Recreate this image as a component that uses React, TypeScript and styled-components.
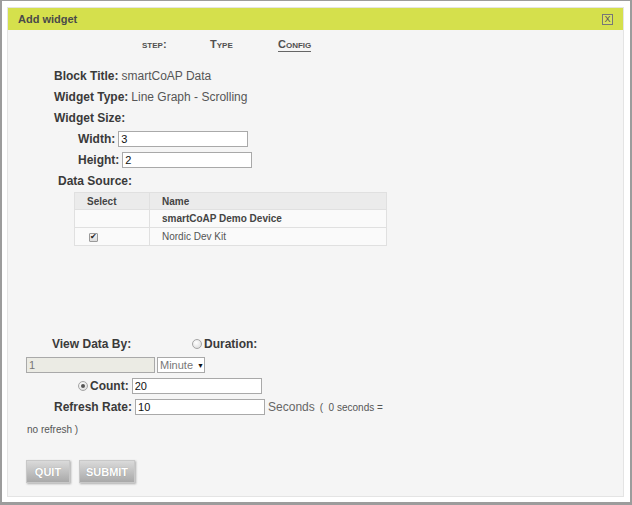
import React from "react";
import styled, { createGlobalStyle } from "styled-components";

const Global = createGlobalStyle`
  html, body { margin: 0; padding: 0; background: #ffffff; }
  body { font-family: "Liberation Sans", Arial, sans-serif; }
  * { box-sizing: border-box; }
`;

const Frame = styled.div`
  width: 632px;
  height: 505px;
  border-style: solid;
  border-color: #9c9c9c;
  border-width: 1px 2px 3px 2px;
  padding: 6px 0 0 5px;
  background: #ffffff;
`;

const Dialog = styled.div`
  width: 617px;
  height: 490px;
  border: 1px solid #e4e4e4;
  background: #f5f5f5;
  display: flex;
  flex-direction: column;
`;

const TitleBar = styled.div`
  height: 22px;
  flex: none;
  background: #d5e04c;
  display: flex;
  align-items: center;
  justify-content: space-between;
  padding: 0 10px 0 10px;
`;

const Title = styled.span`
  font-size: 11px;
  font-weight: bold;
  color: #4a4a4a;
`;

const CloseBox = styled.span`
  width: 11px;
  height: 11px;
  border: 1px solid #777;
  display: flex;
  align-items: center;
  justify-content: center;
  font-size: 9px;
  line-height: 1;
  color: #555;
  background: #d9e35c;
`;

const Steps = styled.div`
  height: 28px;
  display: flex;
  align-items: center;
  padding-left: 134px;
`;

const Step = styled.span<{ $active?: boolean }>`
  width: 68px;
  font-size: 11px;
  font-weight: bold;
  font-variant: small-caps;
  color: #505050;
  span {
    border-bottom: ${(p) => (p.$active ? "1px solid #666" : "none")};
    padding-bottom: 1px;
  }
`;

const Form = styled.div`
  margin-top: 7px;
  display: flex;
  flex-direction: column;
`;

const Row = styled.div<{ $indent: number; $h?: number }>`
  height: ${(p) => p.$h ?? 21}px;
  display: flex;
  align-items: center;
  padding-left: ${(p) => p.$indent}px;
  font-size: 12px;
  color: #555;
  white-space: nowrap;
`;

const Label = styled.span`
  font-weight: bold;
  color: #3a3a3a;
  margin-right: 3px;
`;

const TextInput = styled.input<{ $w?: number }>`
  width: ${(p) => p.$w ?? 130}px;
  height: 16px;
  border: 1px solid #a9a9a9;
  background: #fff;
  font-family: "Liberation Sans", Arial, sans-serif;
  font-size: 11px;
  color: #111;
  padding: 0 2px;
  margin: 0;
  &:disabled {
    background: #ebebe4;
    color: #777;
    border-color: #a9a9a9;
  }
`;

const Table = styled.table`
  margin-left: 66px;
  margin-top: 1px;
  width: 313px;
  border-collapse: collapse;
  font-size: 10px;
  color: #555;
  th, td {
    border: 1px solid #e0e0e0;
    padding: 0 0 0 12px;
    text-align: left;
  }
  th {
    height: 17px;
    background: #ebebeb;
    font-weight: bold;
    color: #444;
  }
  td {
    height: 18px;
    background: #fafafa;
  }
  th:first-child, td:first-child {
    width: 75px;
  }
`;

const Bold = styled.span`
  font-weight: bold;
  color: #444;
`;

const Check = styled.input`
  appearance: none;
  width: 9px;
  height: 9px;
  margin: 0 0 0 2px;
  border: 1px solid #9a9a9a;
  border-radius: 1px;
  background: linear-gradient(#f4f4f4, #dcdcdc);
  position: relative;
  vertical-align: middle;
  &:checked::after {
    content: "✔";
    position: absolute;
    left: 0px;
    top: -2px;
    font-size: 8px;
    color: #222;
  }
`;

const Radio = styled.input`
  appearance: none;
  width: 10px;
  height: 10px;
  margin: 0 2px 0 0;
  border: 1px solid #a5a5a5;
  border-radius: 50%;
  background: radial-gradient(circle at 40% 35%, #ffffff, #d6d6d6);
  position: relative;
  &:checked::after {
    content: "";
    position: absolute;
    left: 2px;
    top: 2px;
    width: 4px;
    height: 4px;
    border-radius: 50%;
    background: #555;
  }
`;

const ViewRow = styled.div`
  margin-top: 88px;
  height: 20px;
  display: flex;
  align-items: center;
  padding-left: 44px;
  font-size: 12px;
`;

const ViewLabel = styled.span`
  width: 140px;
  font-weight: bold;
  color: #3a3a3a;
`;

const LineRow = styled.div<{ $indent: number; $top?: number }>`
  margin-top: ${(p) => p.$top ?? 5}px;
  height: 16px;
  display: flex;
  align-items: center;
  padding-left: ${(p) => p.$indent}px;
  font-size: 12px;
  color: #666;
  white-space: nowrap;
`;

const FakeSelect = styled.span`
  margin-left: 2px;
  width: 48px;
  height: 16px;
  border: 1px solid #a9a9a9;
  background: #fff;
  display: flex;
  align-items: center;
  padding-left: 2px;
  font-size: 11px;
  color: #777;
  gap: 4px;
  b {
    font-size: 7px;
    color: #111;
    font-weight: normal;
  }
`;

const Seconds = styled.span`
  margin-left: 3px;
  font-size: 12px;
  color: #666;
`;

const Small = styled.span`
  font-size: 10px;
  color: #555;
  margin-left: 5px;
`;

const SmallLine = styled.div`
  margin-top: 8px;
  height: 14px;
  line-height: 14px;
  padding-left: 19px;
  font-size: 10px;
  color: #555;
`;

const Buttons = styled.div`
  margin-top: 23px;
  padding-left: 18px;
  display: flex;
  gap: 9px;
`;

const Button = styled.button<{ $w: number }>`
  width: ${(p) => p.$w}px;
  height: 23px;
  border: 1px solid #c8c8c8;
  background: linear-gradient(#dadada, #a9a9a9);
  box-shadow: 1px 1px 2px rgba(0, 0, 0, 0.3);
  color: #fff;
  font-family: "Liberation Sans", Arial, sans-serif;
  font-size: 11px;
  font-weight: bold;
  text-shadow: 0 0 1px rgba(0, 0, 0, 0.25);
  padding: 0;
  cursor: pointer;
`;

export default function App() {
  return (
    <>
      <Global />
      <Frame>
        <Dialog>
          <TitleBar>
            <Title>Add widget</Title>
            <CloseBox>X</CloseBox>
          </TitleBar>
          <Steps>
            <Step><span>step:</span></Step>
            <Step><span>Type</span></Step>
            <Step $active><span>Config</span></Step>
          </Steps>
          <Form>
            <Row $indent={46}>
              <Label>Block Title:</Label>smartCoAP Data
            </Row>
            <Row $indent={46}>
              <Label>Widget Type:</Label>Line Graph - Scrolling
            </Row>
            <Row $indent={46}>
              <Label>Widget Size:</Label>
            </Row>
            <Row $indent={70}>
              <Label>Width:</Label>
              <TextInput defaultValue="3" />
            </Row>
            <Row $indent={70}>
              <Label>Height:</Label>
              <TextInput defaultValue="2" />
            </Row>
            <Row $indent={50}>
              <Label>Data Source:</Label>
            </Row>
            <Table>
              <thead>
                <tr>
                  <th>Select</th>
                  <th>Name</th>
                </tr>
              </thead>
              <tbody>
                <tr>
                  <td></td>
                  <td><Bold>smartCoAP Demo Device</Bold></td>
                </tr>
                <tr>
                  <td><Check type="checkbox" defaultChecked /></td>
                  <td>Nordic Dev Kit</td>
                </tr>
              </tbody>
            </Table>
          </Form>
          <ViewRow>
            <ViewLabel>View Data By:</ViewLabel>
            <Radio type="radio" name="by" />
            <Label>Duration:</Label>
          </ViewRow>
          <LineRow $indent={18} $top={3}>
            <TextInput $w={129} defaultValue="1" disabled />
            <FakeSelect>Minute <b>▼</b></FakeSelect>
          </LineRow>
          <LineRow $indent={70}>
            <Radio type="radio" name="by" defaultChecked />
            <Label>Count:</Label>
            <TextInput defaultValue="20" />
          </LineRow>
          <LineRow $indent={46}>
            <Label>Refresh Rate:</Label>
            <TextInput defaultValue="10" />
            <Seconds>Seconds</Seconds>
            <Small>{"(\u00a0 0 seconds ="}</Small>
          </LineRow>
          <SmallLine>no refresh )</SmallLine>
          <Buttons>
            <Button $w={44}>QUIT</Button>
            <Button $w={56}>SUBMIT</Button>
          </Buttons>
        </Dialog>
      </Frame>
    </>
  );
}
